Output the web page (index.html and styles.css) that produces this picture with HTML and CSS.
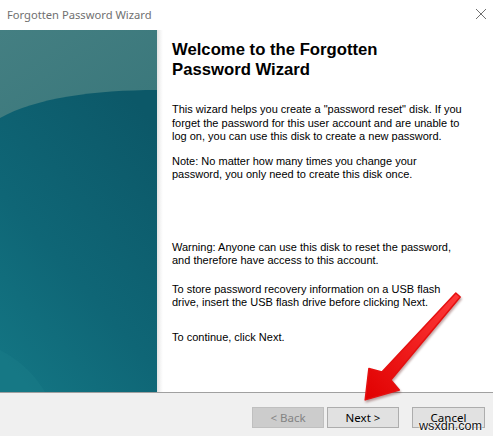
FILE: index.html
```html
<!DOCTYPE html>
<html>
<head>
<meta charset="utf-8">
<link rel="stylesheet" href="styles.css">
</head>
<body>
<div class="window">
  <div class="titlebar">
    <span class="title">Forgotten Password Wizard</span>
    <svg class="close" width="12" height="12" viewBox="0 0 12 12"><path d="M1 1L11 11M11 1L1 11" stroke="#707070" stroke-width="1" fill="none"/></svg>
  </div>
  <div class="main">
    <div class="side">
      <svg width="157" height="362" viewBox="0 0 157 362">
        <defs>
          <linearGradient id="up" x1="0" y1="0" x2="0.3" y2="1">
            <stop offset="0" stop-color="#447f82"/>
            <stop offset="1" stop-color="#2f6f74"/>
          </linearGradient>
          <linearGradient id="low" x1="0.8" y1="0" x2="0.2" y2="1">
            <stop offset="0" stop-color="#0c5868"/>
            <stop offset="0.6" stop-color="#0f6676"/>
            <stop offset="1" stop-color="#137482"/>
          </linearGradient>
        </defs>
        <rect width="157" height="362" fill="url(#up)"/>
        <path d="M0 88 C 35 68, 95 60, 157 60 L157 362 L0 362 Z" fill="url(#low)"/>
        <path d="M0 320 C 20 330, 35 345, 45 362 L0 362 Z" fill="#1a7c88" opacity="0.5"/>
      </svg>
    </div>
    <div class="shade"></div>
    <div class="content">
      <h1 class="heading">Welcome to the Forgotten Password Wizard</h1>
      <p class="para p1">This wizard helps you create a "password reset" disk. If you forget the password for this user account and are unable to log on, you can use this disk to create a new password.</p>
      <p class="para p2">Note: No matter how many times you change your password, you only need to create this disk once.</p>
      <p class="para p3">Warning: Anyone can use this disk to reset the password, and therefore have access to this account.</p>
      <p class="para p4">To store password recovery information on a USB flash drive, insert the USB flash drive before clicking Next.</p>
      <p class="para p5">To continue, click Next.</p>
    </div>
  </div>
  <div class="footer">
    <button class="btn disabled">&lt; Back</button>
    <button class="btn next">Next &gt;</button>
    <button class="btn cancel">Cancel</button>
  </div>
  <svg class="arrow" width="493" height="436" viewBox="0 0 493 436">
    <defs>
      <linearGradient id="red" x1="1" y1="0" x2="0" y2="1">
        <stop offset="0" stop-color="#ff3b3b"/>
        <stop offset="1" stop-color="#e00000"/>
      </linearGradient>
    </defs>
    <polygon points="365.2,399.9 399.3,390 390.9,379.9 460.2,297 455.8,293 381.9,371.9 368.9,368.5" fill="url(#red)" stroke="#e51010" stroke-width="1.5" stroke-linejoin="round"/>
  </svg>
  <div class="watermark">wsxdn.com</div>
</div>
</body>
</html>
```
FILE: styles.css
```css
html, body {
  margin: 0;
  padding: 0;
  background: #ffffff;
}
body {
  width: 493px;
  height: 436px;
  overflow: hidden;
  font-family: "Liberation Sans", Arial, sans-serif;
}
.window {
  position: relative;
  width: 493px;
  height: 436px;
  display: flex;
  flex-direction: column;
}
.titlebar {
  height: 30px;
  display: flex;
  align-items: center;
  justify-content: space-between;
  padding: 0 6px 0 7px;
  box-sizing: border-box;
}
.title {
  font-family: "Noto Sans", "Open Sans", sans-serif;
  font-size: 11.2px;
  color: #707070;
  margin-top: -1px;
}
.close {
  margin-top: -2px;
}
.main {
  display: flex;
  height: 362px;
}
.side {
  width: 157px;
  height: 362px;
}
.side svg {
  display: block;
}
.shade {
  width: 6px;
  background: linear-gradient(to right, #e2e2e2, #f6f6f6 60%, #ffffff);
}
.content {
  flex: 1;
  padding: 10px 0 0 9px;
}
.heading {
  margin: 0;
  font-size: 16.7px;
  line-height: 20px;
  font-weight: bold;
  color: #000;
  width: 240px;
}
.para {
  margin: 0;
  font-size: 11px;
  line-height: 13.5px;
  color: #000;
  width: 290px;
}
.p1 { margin-top: 23px; }
.p2 { margin-top: 11px; }
.p3 { margin-top: 59px; }
.p4 { margin-top: 15px; }
.p5 { margin-top: 21px; }
.footer {
  flex: 1;
  background: #f0f0f0;
  border-top: 1px solid #a0a0a0;
  display: flex;
  justify-content: flex-end;
  align-items: flex-start;
  padding: 14px 8px 0 0;
  box-sizing: border-box;
}
.btn {
  height: 21px;
  width: 72px;
  margin: 0;
  padding: 0;
  background: #e1e1e1;
  border: 1px solid #adadad;
  font-family: "Noto Sans", "Open Sans", sans-serif;
  font-size: 11.5px;
  color: #000;
  box-sizing: border-box;
}
.disabled {
  background: #cccccc;
  border-color: #bfbfbf;
  color: #838383;
}
.next {
  margin-left: 3px;
}
.cancel {
  margin-left: 13px;
  width: 73px;
}
.arrow {
  position: absolute;
  left: 0;
  top: 0;
  pointer-events: none;
  filter: drop-shadow(1px 2px 1px rgba(80,0,0,0.35));
}
.watermark {
  position: absolute;
  left: 419px;
  top: 419px;
  font-family: "Liberation Sans", Arial, sans-serif;
  font-size: 12.6px;
  color: #111;
  text-shadow: 0 0 2px #fff, 0 0 2px #fff, 0 0 1px #fff;
}
```
